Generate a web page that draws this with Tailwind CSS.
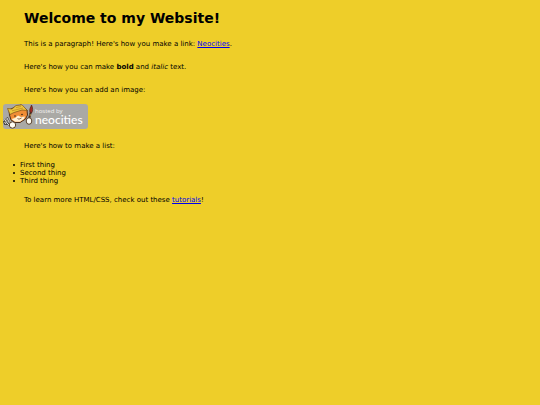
<!DOCTYPE html>
<html lang="en">
<head>
  <meta charset="UTF-8">
  <meta name="viewport" content="width=device-width, initial-scale=1.0">
  <title>My Website</title>
  <script src="https://cdn.jsdelivr.net/npm/@tailwindcss/browser@4"></script>
</head>
<body class="bg-[#eece29] text-black font-['DejaVu_Sans',Verdana,sans-serif] text-[7px] leading-[8px] px-[3px] pt-[9px]">
  <h1 class="pl-[21px] mb-[13px] text-[14px] leading-[18px] font-bold">Welcome to my Website!</h1>

  <p class="pl-[21px] mb-[15px]">This is a paragraph! Here's how you make a link: <a href="https://neocities.org" class="text-[#0000ee] underline">Neocities</a>.</p>

  <p class="pl-[21px] mb-[15px]">Here's how you can make <strong class="font-bold">bold</strong> and <em class="italic">italic</em> text.</p>

  <p class="pl-[21px] mb-[10px]">Here's how you can add an image:</p>

  <a href="https://neocities.org" aria-label="Hosted by Neocities" class="block w-[85px] mb-[13px]">
    <svg class="block w-full" viewBox="0 0 85 25" xmlns="http://www.w3.org/2000/svg">
      <rect x="0" y="0" width="85" height="25" rx="3" fill="#aaa9a5"/>
      <!-- cat head -->
      <path d="M6 6L12 3L18 1L22 5L24 6L24.500 11L22.500 15L17 18.500L12 18.500L8 16L6.500 11Z" fill="#f08d35" stroke="#4b2d1b" stroke-width="1"/>
      <path d="M8.500 15L12 14L15 11.500L18 13L22 12.500L21 15L17 17.800L12 17.800Z" fill="#fff1d5"/>
      <!-- hat -->
      <path d="M4.500 4.500L9 5L13 1.500L19 .8L22 4L24.500 6.500L19 6L11 8.500L7 10.500Z" fill="#edc63f" stroke="#785018" stroke-width=".7"/>
      <path d="M9 6.800L20 4M13 3.500L18 2.500" stroke="#bd851f" stroke-width=".7"/>
      <!-- face -->
      <circle cx="12" cy="12" r=".8" fill="#35231b"/>
      <circle cx="19" cy="10.500" r=".8" fill="#35231b"/>
      <path d="M14.500 14.500L16 15.200L18.500 14" fill="none" stroke="#55301f" stroke-width=".7"/>
      <!-- fork and paw -->
      <path d="M1.500 15L4 19L8 22M4 13.500L6 18M.8 17L2 20L5 20" fill="none" stroke="#4c4b49" stroke-width="2"/>
      <path d="M1.500 15L4 19L7 22M4 14L6 18M1.500 18L3 20" fill="none" stroke="#dededb" stroke-width="1"/>
      <circle cx="9.500" cy="21" r="3.200" fill="#fffdf3" stroke="#58402c" stroke-width="1"/>
      <!-- brush and paw -->
      <path d="M26 15L28 7" stroke="#493123" stroke-width="2"/>
      <path d="M27 8C26 5 28 3 28.500 1C30 4 30 7 28.500 9Z" fill="#a52b22" stroke="#4e251c" stroke-width=".7"/>
      <path d="M26.500 11L28 11" stroke="#e9c264" stroke-width="1"/>
      <ellipse cx="26" cy="17" rx="2.800" ry="3.300" fill="#fffdf3" stroke="#58402c" stroke-width="1"/>
      <text class="font-['Open_Sans',sans-serif] text-[6px]" x="32" y="9" fill="#f2f2f0">hosted by</text>
      <text class="font-[Lato,sans-serif] text-[12px] font-medium" x="32" y="20" fill="#fff">neocities</text>
    </svg>
  </a>

  <p class="pl-[21px] mb-[11px]">Here's how to make a list:</p>

  <ul class="pl-[10px] mb-[11px]">
    <li class="flex items-center gap-[5px] before:size-[2px] before:rounded-full before:bg-black">First thing</li>
    <li class="flex items-center gap-[5px] before:size-[2px] before:rounded-full before:bg-black">Second thing</li>
    <li class="flex items-center gap-[5px] before:size-[2px] before:rounded-full before:bg-black">Third thing</li>
  </ul>

  <p class="pl-[21px]">To learn more HTML/CSS, check out these <a href="https://neocities.org/tutorials" class="text-[#0000ee] underline">tutorials</a>!</p>
</body>
</html>
